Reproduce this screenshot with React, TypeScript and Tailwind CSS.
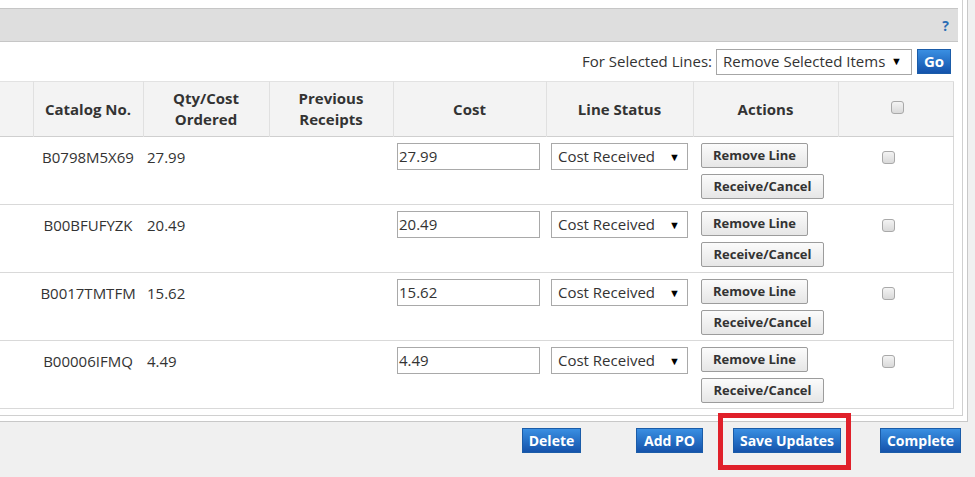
import React from "react";

const rows = [
  { catalog: "B0798M5X69", qty: "27.99" },
  { catalog: "B00BFUFYZK", qty: "20.49" },
  { catalog: "B0017TMTFM", qty: "15.62" },
  { catalog: "B00006IFMQ", qty: "4.49" },
];

function Checkbox() {
  return (
    <span className="inline-block w-[13px] h-[13px] rounded-[3px] border border-[#a9a9a9] bg-linear-to-b from-[#f4f4f4] to-[#d9d9d9]" />
  );
}

function BlueButton({ label, className = "" }: { label: string; className?: string }) {
  return (
    <button
      className={
        "h-[25px] border border-[#1b5ca8] bg-linear-to-b from-[#3a8fe2] to-[#1553ab] text-white font-bold text-[14px] leading-none " +
        className
      }
    >
      {label}
    </button>
  );
}

function GreyButton({ label, className = "" }: { label: string; className?: string }) {
  return (
    <button
      className={
        "h-[25px] border border-[#9c9c9c] rounded-[2px] bg-linear-to-b from-[#fbfbfb] to-[#e6e6e6] text-[#333] font-bold text-[13px] leading-none " +
        className
      }
    >
      {label}
    </button>
  );
}

export default function App() {
  return (
    <div className="w-[975px] h-[477px] overflow-hidden bg-[#f0f0f0] relative font-['Open_Sans',sans-serif] text-[#333]">
      {/* Outer panel */}
      <div className="w-[968px] bg-white border-r border-b border-[#c8c8c8] pb-[5px]">
        <div className="w-[963px] border-r border-b border-[#d0d0d0] pb-[6px]">
          <div className="w-[958px] pt-[8px]">
            {/* Header bar */}
            <div className="h-[34px] bg-[#dedede] border-t border-b border-[#c6c6c6] flex items-center justify-end pr-[9px]">
              <span className="text-[#2a6db5] font-bold text-[14px] leading-none mt-[2px]">?</span>
            </div>

            {/* For selected lines */}
            <div className="h-[39px] flex items-center justify-end pr-[7px]">
              <span className="text-[15px] mr-[4px]">For Selected Lines:</span>
              <div className="w-[196px] h-[26px] border border-[#a6a6a6] flex items-center justify-between pl-[6px] pr-[9px] text-[15px]">
                <span>Remove Selected Items</span>
                <span className="text-[11px] text-black">▼</span>
              </div>
              <BlueButton label="Go" className="w-[34px] h-[23px] ml-[5px] text-[15px]" />
            </div>

            {/* Table */}
            <table className="table-fixed border-collapse w-[953px] border-r border-[#d8d8d8]">
              <colgroup>
                <col className="w-[33px]" />
                <col className="w-[110px]" />
                <col className="w-[126px]" />
                <col className="w-[124px]" />
                <col className="w-[153px]" />
                <col className="w-[147px]" />
                <col className="w-[145px]" />
                <col className="w-[115px]" />
              </colgroup>
              <thead>
                <tr className="h-[55px] bg-[#f3f3f3] border-t border-b border-t-[#e2e2e2] border-b-[#cfcfcf] text-[15px] font-bold leading-[21px]">
                  <th className="border-r border-[#e0e0e0]" />
                  <th className="border-r border-[#e0e0e0] text-center">Catalog No.</th>
                  <th className="border-r border-[#e0e0e0] text-center">
                    Qty/Cost
                    <br />
                    Ordered
                  </th>
                  <th className="border-r border-[#e0e0e0] text-center">
                    Previous
                    <br />
                    Receipts
                  </th>
                  <th className="border-r border-[#e0e0e0] text-center">Cost</th>
                  <th className="border-r border-[#e0e0e0] text-center">Line Status</th>
                  <th className="border-r border-[#e0e0e0] text-center">Actions</th>
                  <th className="text-center">
                    <span className="relative left-[2px] top-[-1px]">
                      <Checkbox />
                    </span>
                  </th>
                </tr>
              </thead>
              <tbody>
                {rows.map((r) => (
                  <tr key={r.catalog} className="h-[68px] border-b border-[#d9d9d9] align-top text-[15px]">
                    <td />
                    <td className="pt-[7px] text-center leading-[26px]">{r.catalog}</td>
                    <td className="pt-[7px] pl-[4px] leading-[26px]">{r.qty}</td>
                    <td />
                    <td className="pt-[6px] pl-[4px]">
                      <div className="w-[143px] h-[27px] border border-[#a9a9a9] flex items-center pl-[1px] leading-none">
                        {r.qty}
                      </div>
                    </td>
                    <td className="pt-[6px] pl-[5px]">
                      <div className="w-[137px] h-[27px] border border-[#a9a9a9] flex items-center justify-between pl-[6px] pr-[7px] leading-none">
                        <span>Cost Received</span>
                        <span className="text-[11px] text-black">▼</span>
                      </div>
                    </td>
                    <td className="pt-[6px] pl-[8px]">
                      <div className="flex flex-col items-start gap-[6px]">
                        <GreyButton label="Remove Line" className="w-[107px]" />
                        <GreyButton label="Receive/Cancel" className="w-[123px]" />
                      </div>
                    </td>
                    <td className="pt-[10px] pl-[44px]">
                      <Checkbox />
                    </td>
                  </tr>
                ))}
              </tbody>
            </table>
          </div>
        </div>
      </div>

      {/* Bottom actions */}
      <div className="flex items-center justify-end pr-[14px] mt-[6px]">
        <BlueButton label="Delete" className="w-[59px]" />
        <BlueButton label="Add PO" className="w-[67px] ml-[55px]" />
        <BlueButton label="Save Updates" className="w-[108px] ml-[30px]" />
        <BlueButton label="Complete" className="w-[81px] ml-[39px]" />
      </div>

      {/* Highlight annotation */}
      <div className="absolute left-[718px] top-[413px] w-[133px] h-[57px] border-[5px] border-[#e0202a]" />
    </div>
  );
}
